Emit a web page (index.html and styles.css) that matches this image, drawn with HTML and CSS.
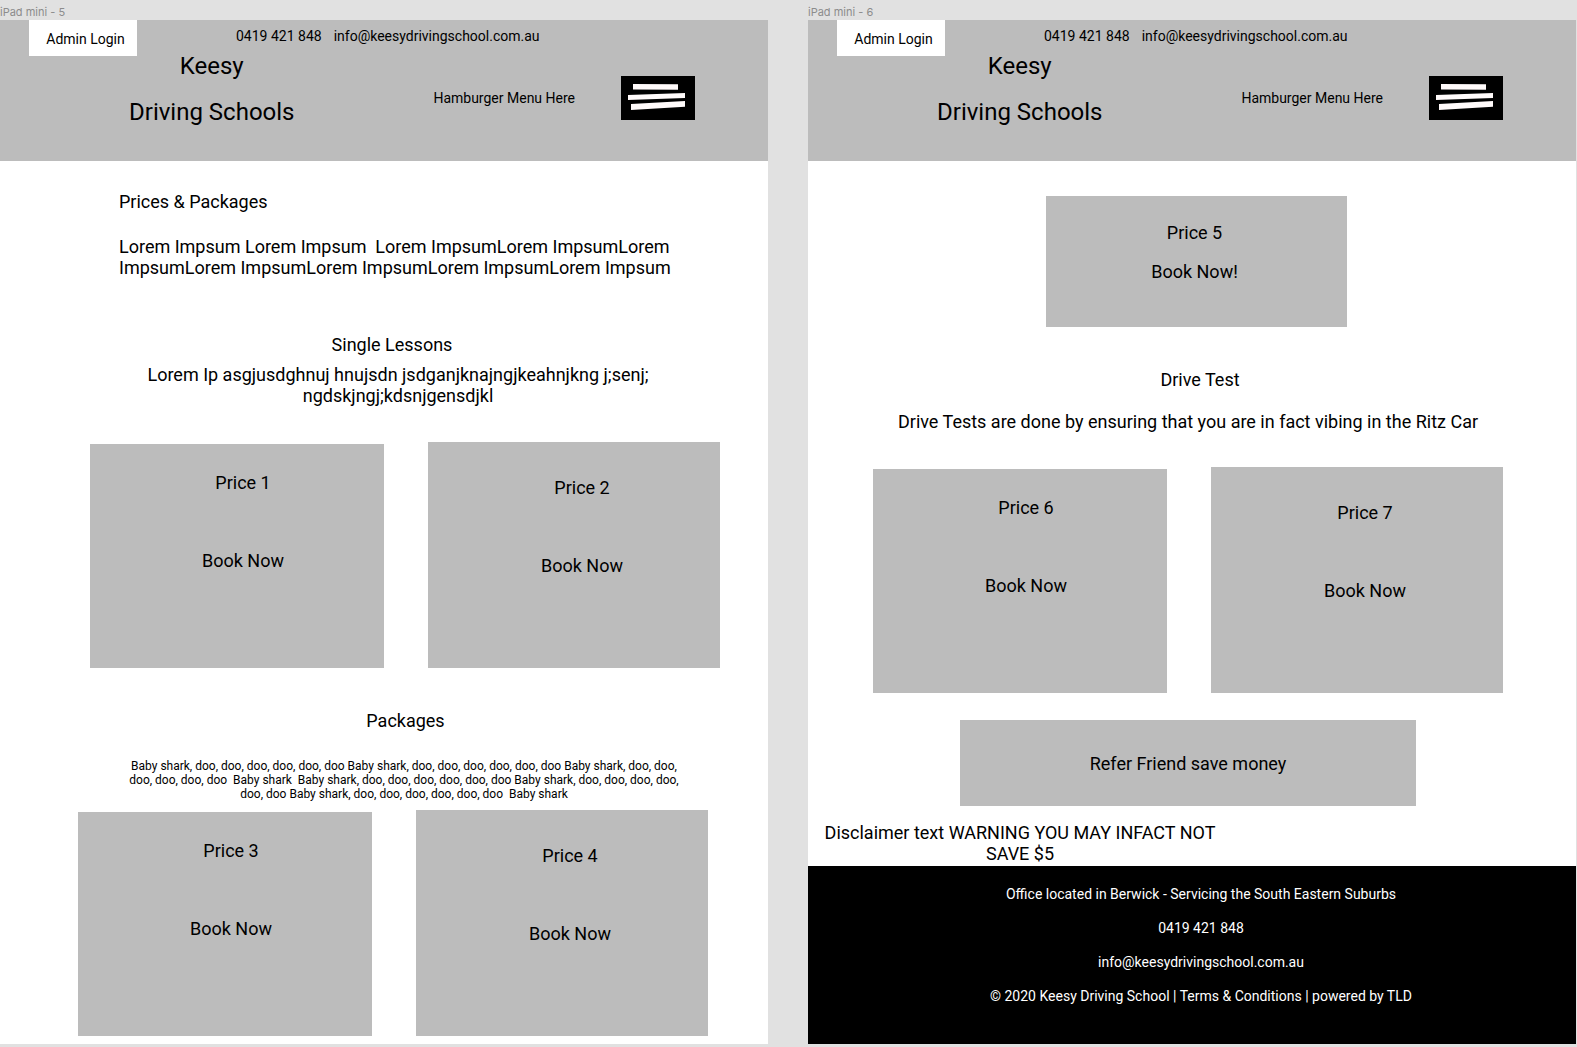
FILE: index.html
```html
<!DOCTYPE html>
<html lang="en">
<head>
<meta charset="utf-8">
<title>Keesy Driving Schools</title>
<link rel="stylesheet" href="styles.css">
</head>
<body>
<div class="board">
  <section class="artboard">
    <div class="label">iPad mini - 5</div>
    <div class="frame">
      <header class="header">
        <div class="topbar">
          <button class="admin">Admin Login</button>
          <div class="contact"><a href="#">0419 421 848</a><a href="#">info@keesydrivingschool.com.au</a></div>
        </div>
        <div class="brandbar">
          <h1 class="brand"><span>Keesy</span><span>Driving Schools</span></h1>
          <div class="menu">
            <span>Hamburger Menu Here</span>
            <button class="burger" aria-label="Menu">
              <svg width="74" height="44" viewBox="0 0 74 44" fill="#fffafa"><path d="M12 8L57 8.3V13.8L12 13.6ZM7 19L64 17V22L7 24ZM10 28L64 25V30.7L10 34Z"/></svg>
            </button>
          </div>
        </div>
      </header>
      <main>
        <div class="intro">
          <h2>Prices &amp; Packages</h2>
          <p>Lorem Impsum Lorem Impsum&nbsp; Lorem ImpsumLorem ImpsumLorem<br>ImpsumLorem ImpsumLorem ImpsumLorem ImpsumLorem Impsum</p>
        </div>
        <div class="lessons">
          <h2>Single Lessons</h2>
          <p>Lorem Ip asgjusdghnuj hnujsdn jsdganjknajngjkeahnjkng j;senj;<br>ngdskjngj;kdsnjgensdjkl</p>
        </div>
        <div class="cards cards-lessons">
          <article class="card"><h3>Price 1</h3><button>Book Now</button></article>
          <article class="card card-tall"><h3>Price 2</h3><button>Book Now</button></article>
        </div>
        <div class="packages">
          <h2>Packages</h2>
          <p>Baby shark, doo, doo, doo, doo, doo, doo Baby shark, doo, doo, doo, doo, doo, doo Baby shark, doo, doo,<br>doo, doo, doo, doo&nbsp; Baby shark&nbsp; Baby shark, doo, doo, doo, doo, doo, doo Baby shark, doo, doo, doo, doo,<br>doo, doo Baby shark, doo, doo, doo, doo, doo, doo&nbsp; Baby shark</p>
        </div>
        <div class="cards cards-packages">
          <article class="card"><h3>Price 3</h3><button>Book Now</button></article>
          <article class="card card-tall"><h3>Price 4</h3><button>Book Now</button></article>
        </div>
      </main>
    </div>
  </section>

  <section class="artboard">
    <div class="label">iPad mini - 6</div>
    <div class="frame">
      <header class="header">
        <div class="topbar">
          <button class="admin">Admin Login</button>
          <div class="contact"><a href="#">0419 421 848</a><a href="#">info@keesydrivingschool.com.au</a></div>
        </div>
        <div class="brandbar">
          <h1 class="brand"><span>Keesy</span><span>Driving Schools</span></h1>
          <div class="menu">
            <span>Hamburger Menu Here</span>
            <button class="burger" aria-label="Menu">
              <svg width="74" height="44" viewBox="0 0 74 44" fill="#fffafa"><path d="M12 8L57 8.3V13.8L12 13.6ZM7 19L64 17V22L7 24ZM10 28L64 25V30.7L10 34Z"/></svg>
            </button>
          </div>
        </div>
      </header>
      <main>
        <div class="single">
          <article class="card card-small"><h3>Price 5</h3><button>Book Now!</button></article>
        </div>
        <div class="test">
          <h2>Drive Test</h2>
          <p>Drive Tests are done by ensuring that you are in fact vibing in the Ritz Car</p>
        </div>
        <div class="cards cards-test">
          <article class="card"><h3>Price 6</h3><button>Book Now</button></article>
          <article class="card card-tall"><h3>Price 7</h3><button>Book Now</button></article>
        </div>
        <div class="referral"><button>Refer Friend save money</button></div>
        <p class="disclaimer">Disclaimer text WARNING YOU MAY INFACT NOT<br>SAVE $5</p>
      </main>
      <footer class="footer">
        <p>Office located in Berwick - Servicing the South Eastern Suburbs</p>
        <p><a href="#">0419 421 848</a></p>
        <p><a href="#">info@keesydrivingschool.com.au</a></p>
        <p>© 2020 Keesy Driving School | <a href="#">Terms &amp; Conditions</a> | powered by TLD</p>
      </footer>
    </div>
  </section>
</div>
</body>
</html>
```
FILE: styles.css
```css
* {
  box-sizing: border-box;
}

body {
  margin: 0;
  background: #e1e1e1;
  color: #000;
  font: 18px/21px Roboto, sans-serif;
}

h1, h2, h3, p {
  margin: 0;
  font-size: inherit;
  font-weight: 400;
}

a {
  color: inherit;
  text-decoration: none;
}

button {
  padding: 0;
  border: 0;
  background: none;
  color: inherit;
  font: inherit;
  cursor: pointer;
}

.board {
  display: grid;
  grid-template-columns: 1fr 1fr;
  gap: 40px;
  padding: 0 1px 3px 0;
}

.artboard {
  display: flex;
  flex-direction: column;
}

.label {
  padding-top: 4px;
  color: #8c8c8c;
  font: 11px/16px Inter, sans-serif;
}

.frame {
  display: flex;
  flex: 1;
  flex-direction: column;
  background: #fff;
  white-space: nowrap;
}

/* Header */
.header {
  padding-bottom: 39px;
  background: #bcbcbc;
}

.topbar {
  display: flex;
  align-items: flex-start;
  gap: 99px;
  padding-left: 29px;
  font-size: 14px;
  line-height: 16px;
}

.admin {
  width: 108px;
  height: 36px;
  padding: 2px 0 0 5px;
  background: #fff;
}

.contact {
  display: flex;
  gap: 12px;
  padding-top: 8px;
}

.brandbar {
  display: flex;
  align-items: flex-start;
  justify-content: space-between;
  padding: 0 73px 0 129px;
}

.brand {
  display: flex;
  flex-direction: column;
  gap: 26px;
  font-size: 24px;
  line-height: 20px;
  text-align: center;
}

.menu {
  display: flex;
  align-items: center;
  gap: 46px;
  padding-top: 20px;
  font-size: 14px;
  line-height: 16px;
}

.burger {
  height: 44px;
  background: #000;
}

.burger svg {
  display: block;
}

/* Text sections */
.intro {
  display: grid;
  gap: 24px;
  padding: 30px 0 0 119px;
}

.lessons {
  display: grid;
  gap: 9px;
  padding: 56px 0 36px 28px;
  text-align: center;
}

.lessons h2 {
  padding-right: 12px;
}

.packages {
  display: grid;
  gap: 28px;
  padding: 42px 0 9px 40px;
  text-align: center;
}

.packages h2 {
  padding-left: 3px;
}

.packages p {
  font-size: 12px;
  line-height: 14px;
}

.test {
  display: grid;
  gap: 21px;
  padding: 42px 0 35px;
  text-align: center;
}

.test h2 {
  padding-left: 16px;
}

.test p {
  padding-right: 8px;
}

/* Price cards */
.cards {
  display: grid;
  grid-template-columns: 294fr 292fr;
  align-items: end;
  gap: 44px;
}

.cards-lessons {
  padding: 0 48px 0 90px;
}

.cards-packages {
  padding: 0 60px 8px 78px;
}

.cards-test {
  padding: 0 73px 0 65px;
}

.card {
  display: flex;
  flex-direction: column;
  align-items: center;
  gap: 57px;
  padding: 28px 0 97px 12px;
  background: #bcbcbc;
}

.card-tall {
  padding: 35px 0 92px 16px;
}

.single {
  padding: 35px 229px 0 238px;
}

.card-small {
  gap: 18px;
  padding: 26px 4px 45px 0;
}

.referral {
  display: grid;
  padding: 27px 160px 16px 152px;
}

.referral button {
  height: 86px;
  background: #bcbcbc;
}

.disclaimer {
  padding: 0 344px 2px 0;
  text-align: center;
}

/* Footer */
.footer {
  flex: 1;
  padding: 11px 0 31px 18px;
  background: #000;
  color: #fff;
  font-size: 14px;
  line-height: 34px;
  text-align: center;
}
```
